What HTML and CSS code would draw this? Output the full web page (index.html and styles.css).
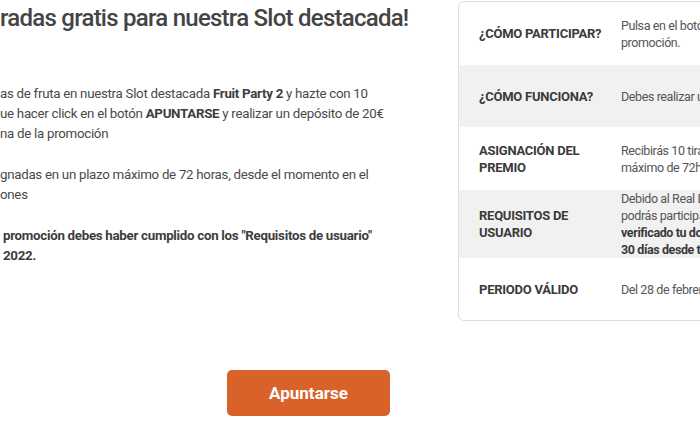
FILE: index.html
```
<!DOCTYPE html>
<html lang="es">
<head>
    <meta charset="UTF-8">
    <meta name="viewport" content="width=device-width, initial-scale=1.0">
    <title>Slot destacada</title>
    <link rel="stylesheet" href="styles.css">
</head>
<body>
    <div class="page">
        <!-- Texto de la promoción -->
        <div class="main">
            <h1 class="title">radas gratis para nuestra Slot destacada!</h1>
            <p class="text">as de fruta en nuestra Slot destacada <b>Fruit Party 2</b> y hazte con 10<br>ue hacer click en el botón <b>APUNTARSE</b> y realizar un depósito de 20€<br>na de la promoción</p>
            <p class="text">gnadas en un plazo máximo de 72 horas, desde el momento en el<br>ones</p>
            <p class="text strong">promoción debes haber cumplido con los "Requisitos de usuario"<br>2022.</p>
        </div>

        <!-- Tabla de condiciones -->
        <div class="side">
            <div class="row double">
                <div class="label">¿Cómo participar?</div>
                <div class="value">Pulsa en el botón APUNTARSE para participar en la<br>promoción.</div>
            </div>
            <div class="row grey">
                <div class="label">¿Cómo funciona?</div>
                <div class="value">Debes realizar un depósito mínimo de 20€.</div>
            </div>
            <div class="row double">
                <div class="label">Asignación del premio</div>
                <div class="value">Recibirás 10 tiradas gratis en un plazo<br>máximo de 72h.</div>
            </div>
            <div class="row grey">
                <div class="label">Requisitos de usuario</div>
                <div class="value">Debido al Real Decreto de Comunicaciones solo<br>podrás participar en esta promoción si has<br><b>verificado tu documento de identidad en los</b><br><b>30 días desde tu registro.</b></div>
            </div>
            <div class="row">
                <div class="label">Periodo válido</div>
                <div class="value">Del 28 de febrero al 6 de marzo de 2022.</div>
            </div>
        </div>
    </div>

    <div class="actions">
        <button class="join">Apuntarse</button>
    </div>
</body>
</html>
```
FILE: styles.css
```
body {
    margin: 0;
    font-family: Roboto, "Open Sans", sans-serif;
    color: #4a4a4a;
    background-color: #fff;
    overflow: hidden;
}

.page {
    display: flex;
    align-items: flex-start;
}

.main {
    width: 458px;
    flex-shrink: 0;
}

.title {
    margin: 3px 0 51px;
    font-size: 24px;
    line-height: 30px;
    font-weight: 500;
    letter-spacing: -0.75px;
    color: #444;
    white-space: nowrap;
}

.text {
    margin: 0 0 21px;
    font-size: 13.3px;
    line-height: 20px;
    letter-spacing: -0.28px;
    white-space: nowrap;
}

.text b,
.strong {
    font-weight: 700;
    color: #3d3d3d;
}

.strong {
    padding-left: 3px;
}

/* cuadro de la derecha */
.side {
    margin-top: 1px;
    width: 420px;
    flex-shrink: 0;
    border: 1px solid #dedede;
    border-radius: 6px;
    overflow: hidden;
}

.row {
    display: flex;
    align-items: center;
    min-height: 62px;
    padding-left: 20px;
}

.row.double {
    min-height: 63px;
}

.row.grey {
    background-color: #f1f1f1;
}

.label {
    width: 142px;
    flex-shrink: 0;
    font-size: 13px;
    line-height: 17px;
    font-weight: 700;
    letter-spacing: -0.25px;
    text-transform: uppercase;
    color: #3a3a3a;
}

.value {
    font-size: 12.5px;
    line-height: 17px;
    letter-spacing: -0.4px;
    color: #555;
    white-space: nowrap;
}

.value b {
    color: #3a3a3a;
}

.actions {
    padding: 49px 0 0 227px;
}

.join {
    width: 163px;
    height: 46px;
    border: none;
    border-radius: 5px;
    background-color: #d9622b;
    color: #fff;
    font-family: Roboto, sans-serif;
    font-size: 17px;
    font-weight: 700;
    cursor: pointer;
}
```
